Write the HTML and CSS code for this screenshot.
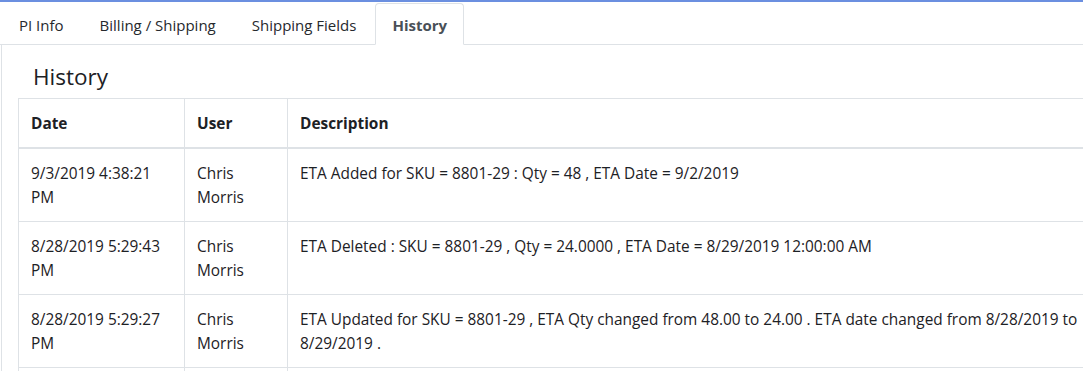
FILE: index.html
```html
<!DOCTYPE html>
<html>
<head>
<meta charset="utf-8">
<link rel="stylesheet" href="styles.css">
</head>
<body>
<div class="topbar"></div>
<ul class="tabs">
  <li class="tab">PI Info</li>
  <li class="tab">Billing / Shipping</li>
  <li class="tab">Shipping Fields</li>
  <li class="tab active">History</li>
</ul>
<div class="panel">
  <h2 class="panel-title">History</h2>
  <table class="history">
    <colgroup>
      <col class="c-date">
      <col class="c-user">
      <col class="c-desc">
    </colgroup>
    <thead>
      <tr><th>Date</th><th>User</th><th>Description</th></tr>
    </thead>
    <tbody>
      <tr>
        <td>9/3/2019 4:38:21 PM</td>
        <td>Chris Morris</td>
        <td>ETA Added for SKU = 8801-29 : Qty = 48 , ETA Date = 9/2/2019</td>
      </tr>
      <tr>
        <td>8/28/2019 5:29:43 PM</td>
        <td>Chris Morris</td>
        <td>ETA Deleted : SKU = 8801-29 , Qty = 24.0000 , ETA Date = 8/29/2019 12:00:00 AM</td>
      </tr>
      <tr>
        <td>8/28/2019 5:29:27 PM</td>
        <td>Chris Morris</td>
        <td>ETA Updated for SKU = 8801-29 , ETA Qty changed from 48.00 to 24.00 . ETA date changed from 8/28/2019 to 8/29/2019 .</td>
      </tr>
      <tr class="next">
        <td></td>
        <td></td>
        <td></td>
      </tr>
    </tbody>
  </table>
</div>
</body>
</html>
```

FILE: styles.css
```css
html, body {
  margin: 0;
  padding: 0;
  overflow: hidden;
  background: #fff;
}
body {
  font-family: "Open Sans", "Noto Sans", sans-serif;
  font-size: 15.4px;
  line-height: 24px;
  color: #1d2125;
  width: 1083px;
  height: 371px;
}
.topbar {
  height: 2px;
  background: #6b8fe0;
}
.tabs {
  list-style: none;
  margin: 1px 0 0 0;
  padding: 0 0 0 2px;
  display: flex;
  border-bottom: 1px solid #dee2e6;
  font-size: 15px;
}
.tab {
  padding: 9px 16px 7px;
  margin-right: 2px;
  margin-bottom: -1px;
  border: 1px solid transparent;
  border-radius: 4px 4px 0 0;
  color: #26292d;
}
.tab.active {
  font-weight: 700;
  color: #495057;
  background: #fff;
  border-color: #dee2e6 #dee2e6 #fff;
}
.panel {
  border-left: 1px solid #dee2e6;
  margin-left: 1px;
  padding: 0 0 0 16px;
  width: 1120px;
}
.panel-title {
  margin: 0;
  padding: 17px 0 7px 15px;
  font-size: 22.5px;
  line-height: 29px;
  font-weight: 400;
  color: #1d2125;
}
.history {
  border-collapse: collapse;
  table-layout: fixed;
  width: 1077px;
  border: 1px solid #dee2e6;
}
.c-date { width: 166px; }
.c-user { width: 103px; }
.history th,
.history td {
  padding: 13px 12px 11px;
  text-align: left;
  border: 1px solid #dee2e6;
  vertical-align: top;
}
.history th {
  font-weight: 700;
  vertical-align: bottom;
  border-bottom: 2px solid #dee2e6;
}
.history .next td {
  height: 48px;
}
```
